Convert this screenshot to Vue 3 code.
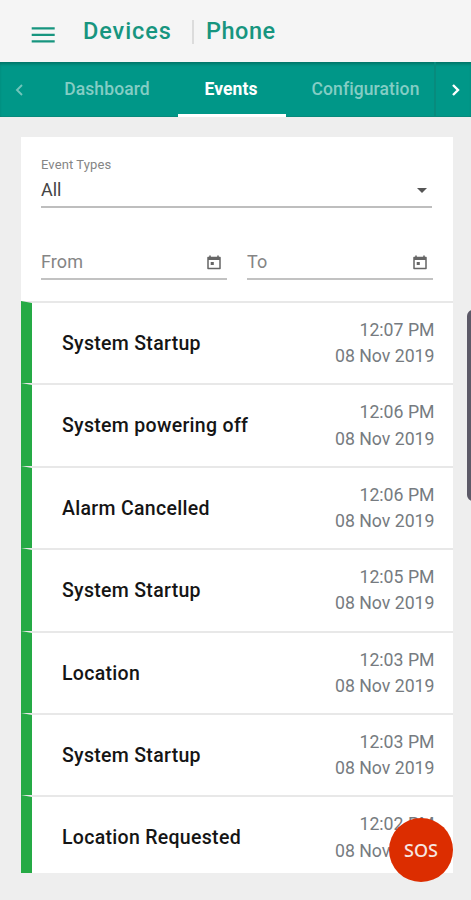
<script setup>
const tabs = [
  { label: 'Dashboard', key: 'dashboard' },
  { label: 'Events', key: 'events' },
  { label: 'Configuration', key: 'configuration' },
]
const activeTab = 'events'
const dateFields = ['From', 'To']
const events = [
  { name: 'System Startup', time: '12:07 PM' },
  { name: 'System powering off', time: '12:06 PM' },
  { name: 'Alarm Cancelled', time: '12:06 PM' },
  { name: 'System Startup', time: '12:05 PM' },
  { name: 'Location', time: '12:03 PM' },
  { name: 'System Startup', time: '12:03 PM' },
  { name: 'Location Requested', time: '12:02 PM' },
]
</script>

<template>
  <div class="screen">
    <header class="topbar">
      <svg class="menu" viewBox="0 0 24 18"><path d="M0.7 2.3h23M0.7 8.8h23M0.7 15.3h23" /></svg>
      <span class="crumb devices">Devices</span>
      <span class="divider"></span>
      <span class="crumb">Phone</span>
    </header>

    <nav class="tabs">
      <button class="arrow prev"><svg viewBox="0 0 10 14"><path d="M8 2L3 7l5 5" /></svg></button>
      <div class="tablist">
        <div v-for="tab in tabs" :key="tab.key" class="tab" :class="[tab.key, { active: tab.key === activeTab }]">
          <span>{{ tab.label }}</span>
        </div>
      </div>
      <button class="arrow next"><svg viewBox="0 0 10 14"><path d="M2 2l5 5-5 5" /></svg></button>
    </nav>

    <main class="card">
      <section class="filters">
        <div class="label">Event Types</div>
        <div class="select">
          <span>All</span>
          <svg class="caret" viewBox="0 0 10 5"><path d="M0 0h10L5 5z" /></svg>
        </div>
        <div class="dates">
          <div v-for="field in dateFields" :key="field" class="date">
            <span>{{ field }}</span>
            <svg class="calendar" viewBox="0 0 14 15">
              <path d="M1 2.4h12v11H1z" fill="none" stroke="currentColor" stroke-width="1.5" stroke-linejoin="round" />
              <path d="M1 2h12v3H1zM2.2 0.4h1.6V3H2.2zM10.2 0.4h1.6V3h-1.6zM3.7 7h3.1v3H3.7z" fill="currentColor" />
            </svg>
          </div>
        </div>
      </section>
      <ul class="list">
        <li v-for="(event, i) in events" :key="i" class="row">
          <span class="name">{{ event.name }}</span>
          <span class="when">{{ event.time }}<br />08 Nov 2019</span>
        </li>
      </ul>
    </main>

    <div class="scrollbar"></div>
    <button class="sos">SOS</button>
  </div>
</template>

<style>
body {
  margin: 0;
  overflow: hidden;
}
</style>

<style scoped>
.screen {
  position: relative;
  box-sizing: border-box;
  height: 900px;
  overflow: hidden;
  background: #eeeeee;
  font-family: Roboto, sans-serif;
}
button {
  border: 0;
  padding: 0;
  background: none;
}
.topbar {
  display: flex;
  box-sizing: border-box;
  height: 62px;
  padding-left: 31px;
  background: #f5f5f5;
  color: #17957f;
}
.menu {
  width: 24px;
  height: 18px;
  margin: 26px 28px 0 0;
  fill: none;
  stroke: #17957f;
  stroke-width: 2.2;
}
.crumb {
  margin-top: 16px;
  font-size: 23.5px;
  font-weight: 500;
  line-height: 30px;
  letter-spacing: 0.5px;
}
.devices {
  width: 109px;
  letter-spacing: 0.9px;
}
.divider {
  width: 2px;
  height: 24px;
  margin: 20px 12px 0 0;
  background: #dcdcdc;
}
.tabs {
  display: flex;
  height: 55px;
  background: #009788;
  box-shadow: inset 0 3px 3px -1px rgba(0, 50, 40, 0.35), inset 0 -1px 0 #078a7c;
}
.arrow {
  display: flex;
  align-items: center;
  justify-content: center;
  width: 37px;
}
.arrow svg {
  width: 10px;
  height: 14px;
  fill: none;
  stroke: #fff;
  stroke-width: 2.4;
}
.prev svg {
  stroke: #72c5bb;
  stroke-width: 1.9;
}
.next {
  box-sizing: border-box;
  padding-left: 4px;
  border-left: 2px solid #078b7d;
}
.tablist {
  display: flex;
  flex: 1;
}
.tab {
  box-sizing: border-box;
  height: 55px;
  color: #84cdc4;
  font-size: 17.5px;
  font-weight: 500;
  line-height: 55px;
  letter-spacing: 0.1px;
  text-align: center;
}
.dashboard {
  width: 141px;
  padding-right: 1px;
}
.events {
  width: 108px;
  padding-right: 2px;
}
.configuration {
  width: 148px;
  padding-left: 11px;
}
.active {
  border-bottom: 3px solid #fff;
  color: #fff;
  font-weight: 700;
}
.card {
  display: flex;
  flex-direction: column;
  box-sizing: border-box;
  width: 431.5px;
  height: 735.5px;
  margin: 20px 0 0 21px;
  overflow: hidden;
  background: #fff;
}
.filters {
  flex: none;
  height: 164px;
  padding: 0 20px;
  color: #858585;
}
.label {
  padding-top: 19px;
  font-size: 13px;
  line-height: 17px;
  letter-spacing: 0.1px;
}
.select {
  display: flex;
  justify-content: space-between;
  box-sizing: border-box;
  width: 391px;
  height: 35px;
  border-bottom: 2px solid #bebebe;
  color: #444;
  font-size: 18px;
  line-height: 34px;
}
.caret {
  width: 10px;
  height: 5px;
  margin: 15px 5px 0 0;
  fill: #555;
}
.dates {
  display: grid;
  grid-template-columns: 185.5px 185.5px;
  gap: 20.5px;
  margin-top: 37px;
}
.date {
  display: flex;
  justify-content: space-between;
  box-sizing: border-box;
  height: 35px;
  border-bottom: 2px solid #c2c2c2;
  font-size: 18px;
  line-height: 34px;
  letter-spacing: 0.1px;
}
.calendar {
  width: 14px;
  height: 15px;
  margin: 10px 6px 0 0;
  color: #666;
}
.list {
  flex: 1;
  margin: 0;
  padding: 0;
  list-style: none;
}
.row {
  display: flex;
  justify-content: space-between;
  box-sizing: border-box;
  height: 82.4px;
  padding: 14px 18px 0 30px;
  border-top: 2px solid #e8e8e8;
  border-left: 11px solid #25aa45;
}
.name {
  color: #151515;
  font-size: 19.5px;
  font-weight: 500;
  line-height: 53px;
  letter-spacing: 0.3px;
}
.when {
  color: #767b80;
  font-size: 17.7px;
  line-height: 26.2px;
  text-align: right;
}
.scrollbar {
  position: absolute;
  top: 310px;
  left: 467px;
  width: 12px;
  height: 191px;
  border-radius: 6px;
  background: #5c5967;
}
.sos {
  position: absolute;
  top: 818px;
  left: 389px;
  width: 64px;
  height: 64px;
  border-radius: 50%;
  background: #dc2d00;
  color: #f6e6e0;
  font: 500 18px/64px "Noto Sans", sans-serif;
}
</style>
